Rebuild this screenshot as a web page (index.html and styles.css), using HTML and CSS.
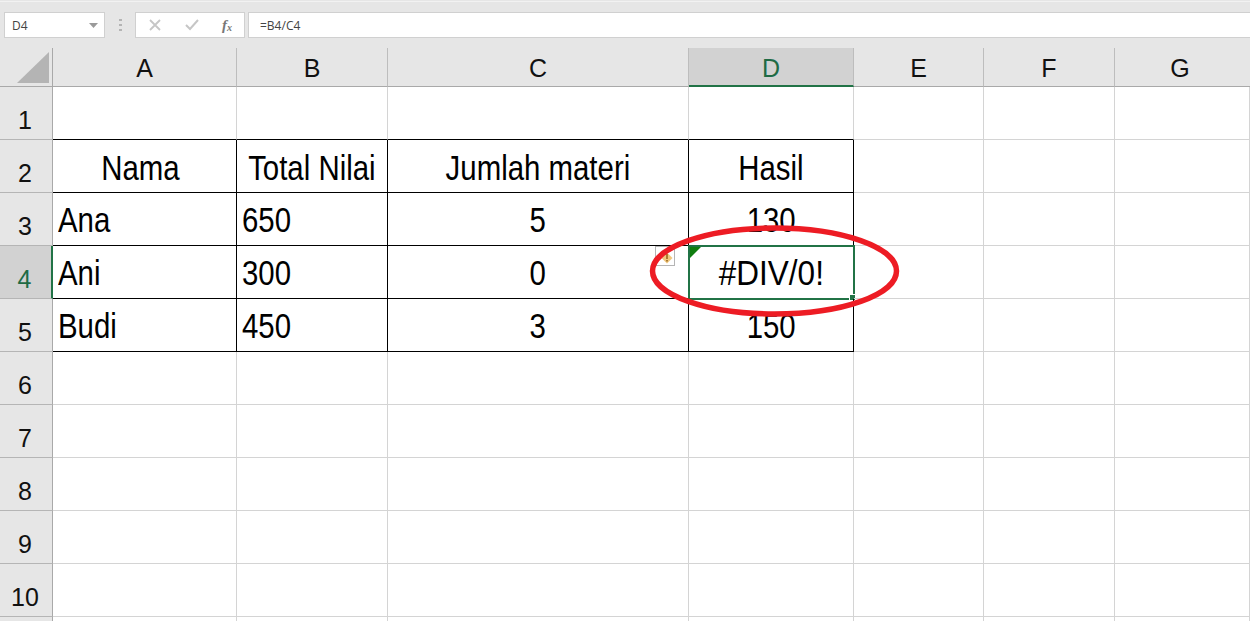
FILE: index.html
```html
<!DOCTYPE html>
<html lang="en">
<head>
    <meta charset="UTF-8">
    <title>Excel - #DIV/0!</title>
    <link rel="stylesheet" href="styles.css">
</head>
<body>

<div class="toolbar">
    <div class="name-box">
        <span>D4</span>
        <svg class="caret" width="9" height="5" viewBox="0 0 9 5"><path d="M0 0h9L4.500 5z" fill="#9a9a9a"/></svg>
    </div>
    <svg class="grip" width="3" height="12" viewBox="0 0 3 12"><path d="M0 0h3v2H0zM0 5h3v2H0zM0 10h3v2H0z" fill="#b4b4b4"/></svg>
    <div class="fx-buttons">
        <svg width="12" height="12" viewBox="0 0 12 12"><path d="M1 1l10 10M11 1L1 11" stroke="#c6c6c6" stroke-width="1.800" fill="none"/></svg>
        <svg width="14" height="12" viewBox="0 0 14 12"><path d="M1 6l4 4 8-9" stroke="#c6c6c6" stroke-width="2" fill="none"/></svg>
        <span class="fx">f<sub>x</sub></span>
    </div>
    <div class="formula">=B4/C4</div>
</div>

<div class="sheet">
    <div class="corner"><svg width="32" height="31" viewBox="0 0 32 31"><path d="M32 0v31H0z" fill="#b4b4b4"/></svg></div>
    <div class="col">A</div>
    <div class="col">B</div>
    <div class="col">C</div>
    <div class="col col-active">D</div>
    <div class="col">E</div>
    <div class="col">F</div>
    <div class="col col-last">G</div>

    <div class="row">1</div>
    <div class="cell line-bottom"></div>
    <div class="cell line-bottom"></div>
    <div class="cell line-bottom"></div>
    <div class="cell line-bottom"></div>
    <div class="cell"></div><div class="cell"></div><div class="cell"></div>

    <div class="row">2</div>
    <div class="cell boxed center head"><span class="txt">Nama </span></div>
    <div class="cell boxed center head"><span class="txt">Total Nilai</span></div>
    <div class="cell boxed center head"><span class="txt">Jumlah materi</span></div>
    <div class="cell boxed center head"><span class="txt">Hasil</span></div>
    <div class="cell"></div><div class="cell"></div><div class="cell"></div>

    <div class="row">3</div>
    <div class="cell boxed"><span class="txt">Ana</span></div>
    <div class="cell boxed"><span class="txt">650</span></div>
    <div class="cell boxed center"><span class="txt">5</span></div>
    <div class="cell boxed center"><span class="txt">130</span></div>
    <div class="cell"></div><div class="cell"></div><div class="cell"></div>

    <div class="row row-active">4</div>
    <div class="cell boxed"><span class="txt">Ani</span></div>
    <div class="cell boxed"><span class="txt">300</span></div>
    <div class="cell boxed center"><span class="txt">0</span></div>
    <div class="cell boxed center selected"><span class="txt txt-wide">#DIV/0!</span>
        <span class="error-mark"></span>
        <span class="fill-handle"></span>
        <span class="error-btn"><svg width="14" height="14" viewBox="0 0 14 14"><path d="M7 1.500l5.500 5.500L7 12.500 1.500 7z" fill="#f0c77e"/><path d="M6.200 3h1.600v5H6.200zM6.200 9h1.600v1.600H6.200z" fill="#9a6a1e"/></svg></span>
    </div>
    <div class="cell"></div><div class="cell"></div><div class="cell"></div>

    <div class="row">5</div>
    <div class="cell boxed"><span class="txt">Budi</span></div>
    <div class="cell boxed"><span class="txt">450</span></div>
    <div class="cell boxed center"><span class="txt">3</span></div>
    <div class="cell boxed center"><span class="txt">150</span></div>
    <div class="cell"></div><div class="cell"></div><div class="cell"></div>

    <div class="row">6</div>
    <div class="cell"></div><div class="cell"></div><div class="cell"></div><div class="cell"></div><div class="cell"></div><div class="cell"></div><div class="cell"></div>
    <div class="row">7</div>
    <div class="cell"></div><div class="cell"></div><div class="cell"></div><div class="cell"></div><div class="cell"></div><div class="cell"></div><div class="cell"></div>
    <div class="row">8</div>
    <div class="cell"></div><div class="cell"></div><div class="cell"></div><div class="cell"></div><div class="cell"></div><div class="cell"></div><div class="cell"></div>
    <div class="row">9</div>
    <div class="cell"></div><div class="cell"></div><div class="cell"></div><div class="cell"></div><div class="cell"></div><div class="cell"></div><div class="cell"></div>
    <div class="row">10</div>
    <div class="cell"></div><div class="cell"></div><div class="cell"></div><div class="cell"></div><div class="cell"></div><div class="cell"></div><div class="cell"></div>
    <div class="row row-stub"></div>
    <div class="cell cell-stub"></div><div class="cell cell-stub"></div><div class="cell cell-stub"></div><div class="cell cell-stub"></div><div class="cell cell-stub"></div><div class="cell cell-stub"></div><div class="cell cell-stub"></div>

    <!-- red marker circled around the error -->
    <svg class="marker" width="260" height="102" viewBox="0 0 260 102"><ellipse cx="129.500" cy="51" rx="122" ry="43" fill="none" stroke="#ed1c24" stroke-width="5.500"/></svg>
</div>

</body>
</html>
```

FILE: styles.css
```css
html, body {
    height: 100%;
}
body {
    margin: 0;
    overflow: hidden;
    background-color: #fff;
    font-family: "Liberation Sans", Arial, sans-serif;
}
.toolbar {
    display: flex;
    align-items: flex-start;
    height: 48px;
    box-sizing: border-box;
    padding: 11px 0 0 4px;
    background-color: #e6e6e6;
    border-top: 1px solid #e6e6e6;
    box-shadow: inset 0 1px 0 #f2f2f2;
}
.name-box, .fx-buttons, .formula {
    display: flex;
    align-items: center;
    box-sizing: border-box;
    height: 26px;
    background-color: #fff;
    border: 1px solid #d0d0d0;
    font-family: "Open Sans", sans-serif;
    font-size: 12px;
    color: #444;
}
.name-box {
    justify-content: space-between;
    width: 101px;
    padding: 0 6px 0 7px;
}
.grip {
    margin: 7px 13px 0 14px;
}
.fx-buttons {
    justify-content: space-between;
    width: 110px;
    padding: 0 12px 0 13px;
    margin-right: 3px;
}
.fx {
    font-family: "Liberation Serif", serif;
    font-style: italic;
    font-weight: bold;
    font-size: 15px;
    color: #777;
}
.fx sub {
    font-size: 10px;
    line-height: 0;
    vertical-align: -1px;
}
.formula {
    flex: 1;
    padding-left: 11px;
    border-right: none;
}
.sheet {
    position: relative;
    display: grid;
    grid-template-columns: 53px 184px 151px 301px 165px 130px 131px 1fr;
    grid-template-rows: 39px repeat(10, 53px) 4px;
    height: 573px;
}
.corner {
    display: flex;
    align-items: flex-end;
    justify-content: flex-end;
    padding: 0 3px 3px 0;
    box-sizing: border-box;
    background-color: #e6e6e6;
    border-right: 1px solid #a9a9a9;
    border-bottom: 1px solid #a9a9a9;
}
.col, .row {
    display: flex;
    align-items: center;
    justify-content: center;
    box-sizing: border-box;
    background-color: #e6e6e6;
    font-size: 25px;
    color: #111;
}
.col {
    padding-top: 3px;
    border-right: 1px solid #bdbdbd;
    border-bottom: 1px solid #a9a9a9;
}
.col-last {
    padding-right: 5px;
    border-right: none;
}
.col-active {
    color: #1f6b45;
    background-color: #d2d2d2;
    border-bottom: 2px solid #217346;
}
.row {
    padding: 15px 2px 0 0;
    border-right: 1px solid #a9a9a9;
    border-bottom: 1px solid #b5b5b5;
}
.row-active {
    color: #1f6b45;
    background-color: #d2d2d2;
    border-right: 2px solid #217346;
}
.row-stub {
    padding: 0;
    border-bottom: none;
}
.cell {
    position: relative;
    display: flex;
    align-items: center;
    box-sizing: border-box;
    padding-left: 5px;
    border-right: 1px solid #d4d4d4;
    border-bottom: 1px solid #d4d4d4;
    font-size: 35px;
    color: #000;
    white-space: nowrap;
}
.cell-stub {
    border-bottom: none;
}
/* Arial Narrow is not available, so the text is squeezed to its width */
.txt {
    display: inline-block;
    padding-top: 1px;
    white-space: pre;
    transform: scaleX(0.84);
    transform-origin: left center;
}
.center .txt {
    transform-origin: center;
}
.head .txt {
    padding-top: 3px;
}
.txt-wide {
    transform: scaleX(0.9);
}
.line-bottom {
    border-bottom-color: #000;
}
.boxed {
    border-right-color: #000;
    border-bottom-color: #000;
}
.center {
    justify-content: center;
    padding-left: 0;
}
.selected {
    outline: 2px solid #217346;
    outline-offset: -1px;
}
.error-mark {
    position: absolute;
    left: 1px;
    top: 1px;
    border-top: 11px solid #0f7d0f;
    border-right: 11px solid transparent;
}
.fill-handle {
    position: absolute;
    right: -3px;
    bottom: -3px;
    width: 5px;
    height: 5px;
    background-color: #217346;
    border: 1px solid #fff;
}
.error-btn {
    position: absolute;
    left: -34px;
    top: 0;
    display: flex;
    align-items: flex-end;
    justify-content: flex-end;
    box-sizing: border-box;
    width: 20px;
    height: 20px;
    background-color: #fff;
    border: 1px solid #b5b5b5;
}
.marker {
    position: absolute;
    left: 645px;
    top: 172px;
}
```
